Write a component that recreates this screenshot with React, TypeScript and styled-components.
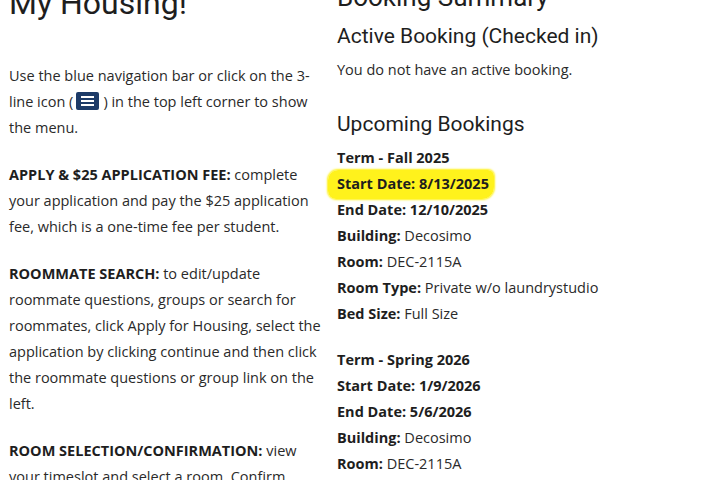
import React from "react";
import styled, { createGlobalStyle } from "styled-components";

const GlobalStyle = createGlobalStyle`
  html, body { margin: 0; padding: 0; background: #fff; }
  body { overflow: hidden; }
  #root { height: 480px; overflow: hidden; }
`;

const Page = styled.div`
  display: grid;
  grid-template-columns: 316px 1fr;
  column-gap: 12px;
  padding: 0 9px;
  color: #2a2a2a;
  font-family: "Open Sans", "Liberation Sans", sans-serif;
  font-size: 14.5px;
  line-height: 26px;
`;

const Column = styled.div<{ $shift: number }>`
  margin-top: ${(p) => p.$shift}px;
`;

const Title = styled.h1`
  font-family: Roboto, "Liberation Sans", sans-serif;
  font-weight: 400;
  font-size: 32px;
  line-height: 38px;
  color: #1e1e1e;
  margin: 0 0 41px;
`;

const SubTitle = styled.h2`
  font-family: Roboto, "Liberation Sans", sans-serif;
  font-weight: 400;
  font-size: 26px;
  line-height: 30px;
  color: #1e1e1e;
  margin: 0 0 11px;
`;

const Section = styled.h3<{ $top?: number }>`
  font-family: Roboto, "Liberation Sans", sans-serif;
  font-weight: 400;
  font-size: 21px;
  line-height: 26px;
  color: #1e1e1e;
  margin: ${(p) => p.$top ?? 0}px 0 8px;
`;

const Para = styled.p`
  margin: 0 0 21px;
`;

const Block = styled.div`
  margin: 0 0 20px;
`;

const Line = styled.div`
  white-space: nowrap;
`;

const Strong = styled.b`
  font-weight: 700;
  color: #1e1e1e;
`;

const Highlight = styled.span`
  background: #fff21c;
  border-radius: 10px 6px 12px 8px;
  padding: 4px 5px 6px 9px;
  margin-left: -9px;
  box-shadow: 0 0 2px 1px #fff21c;
`;

const MenuIcon = styled.span`
  display: inline-flex;
  vertical-align: -3px;
  margin: 0 4px 0 3px;
`;

const Hamburger = () => (
  <MenuIcon>
    <svg width="23" height="18" viewBox="0 0 23 18">
      <rect x="0" y="0" width="23" height="18" rx="2" fill="#1d3b68" />
      <rect x="5" y="4" width="13" height="2" fill="#fff" />
      <rect x="5" y="8" width="13" height="2" fill="#fff" />
      <rect x="5" y="12" width="13" height="2" fill="#fff" />
    </svg>
  </MenuIcon>
);

type Field = { label: string; value?: string; mark?: boolean };

const fall: Field[] = [
  { label: "Term - Fall 2025" },
  { label: "Start Date: 8/13/2025", mark: true },
  { label: "End Date: 12/10/2025" },
  { label: "Building:", value: "Decosimo" },
  { label: "Room:", value: "DEC-2115A" },
  { label: "Room Type:", value: "Private w/o laundrystudio" },
  { label: "Bed Size:", value: "Full Size" },
];

const spring: Field[] = [
  { label: "Term - Spring 2026" },
  { label: "Start Date: 1/9/2026" },
  { label: "End Date: 5/6/2026" },
  { label: "Building:", value: "Decosimo" },
  { label: "Room:", value: "DEC-2115A" },
  { label: "Room Type:", value: "Private w/o laundrystudio" },
  { label: "Bed Size:", value: "Full Size" },
];

const Booking = ({ fields }: { fields: Field[] }) => (
  <Block>
    {fields.map((f) => (
      <Line key={f.label}>
        {f.mark ? (
          <Highlight>
            <Strong>{f.label}</Strong>
          </Highlight>
        ) : (
          <Strong>{f.label}</Strong>
        )}
        {f.value ? ` ${f.value}` : null}
      </Line>
    ))}
  </Block>
);

export default function App() {
  return (
    <>
      <GlobalStyle />
      <Page>
        <Column $shift={-16}>
          <Title>My Housing!</Title>
          <Para>
            Use the blue navigation bar or click on the 3-line icon (
            <Hamburger />) in the top left corner to show the menu.
          </Para>
          <Para>
            <Strong>APPLY &amp; $25 APPLICATION FEE:</Strong> complete your
            application and pay the $25 application fee, which is a one-time
            fee per student.
          </Para>
          <Para>
            <Strong>ROOMMATE SEARCH:</Strong> to edit/update roommate
            questions, groups or search for roommates, click Apply for Housing,
            select the application by clicking continue and then click the
            roommate questions or group link on the left.
          </Para>
          <Para>
            <Strong>ROOM SELECTION/CONFIRMATION:</Strong> view your timeslot
            and select a room. Confirm acceptance of your room assignment.
          </Para>
        </Column>
        <Column $shift={-18}>
          <SubTitle>Booking Summary</SubTitle>
          <Section>Active Booking (Checked in)</Section>
          <Para>You do not have an active booking.</Para>
          <Section $top={28}>Upcoming Bookings</Section>
          <Booking fields={fall} />
          <Booking fields={spring} />
        </Column>
      </Page>
    </>
  );
}
